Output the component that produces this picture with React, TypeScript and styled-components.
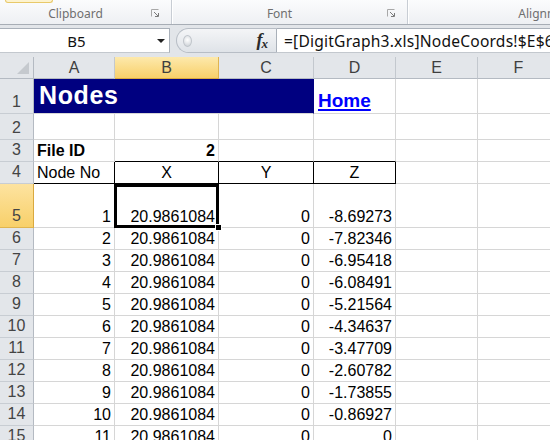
import React from "react";
import styled, { createGlobalStyle } from "styled-components";

const Global = createGlobalStyle`
  html, body { margin: 0; padding: 0; width: 550px; height: 440px; overflow: hidden; background: #fff; }
  body { font-family: "Liberation Sans", Arial, sans-serif; }
`;

const Page = styled.div`
  width: 550px;
  height: 440px;
  overflow: hidden;
  display: flex;
  flex-direction: column;
  background: #e2e5e9;
`;

/* ---------- Ribbon ---------- */
const Ribbon = styled.div`
  flex: none;
  height: 25px;
  box-sizing: border-box;
  display: grid;
  grid-template-columns: 172px 236px 300px;
  background: linear-gradient(#fbfcfd, #eef0f3);
  border-bottom: 1px solid #a7adb5;
`;

const Group = styled.div`
  display: grid;
  grid-template-columns: 1fr 20px;
  grid-template-rows: 4px 1fr;
  border-right: 1px solid #c8cdd4;
  box-shadow: 1px 0 0 #ffffff;
`;

const ButtonStub = styled.div`
  grid-column: 1;
  grid-row: 1;
  justify-self: start;
  margin-left: 5px;
  width: 48px;
  height: 3px;
  box-sizing: border-box;
  border: 1px solid #e8c96a;
  border-top: none;
  border-radius: 0 0 3px 3px;
  background: #fdf3cf;
`;

const GroupLabel = styled.div`
  grid-column: 1;
  grid-row: 2;
  display: flex;
  align-items: center;
  justify-content: center;
  font-family: "Noto Sans", "Open Sans", sans-serif;
  font-size: 12px;
  color: #6f6f6f;
  white-space: nowrap;
  padding-bottom: 2px;
`;

const Launcher = styled.div`
  grid-column: 2;
  grid-row: 2;
  display: flex;
  align-items: center;
  justify-content: flex-start;
  padding-bottom: 2px;
`;

const LauncherIcon = () => (
  <svg width="8" height="8" viewBox="0 0 8 8">
    <path d="M0.5 7.5V0.5H7.5" fill="none" stroke="#a8a8a8" strokeWidth="1" />
    <path d="M3 3L7 7" stroke="#7a7a7a" strokeWidth="1" />
    <path d="M7.5 4V7.5H4" fill="none" stroke="#7a7a7a" strokeWidth="1" />
  </svg>
);

/* ---------- Formula bar ---------- */
const FormulaBar = styled.div`
  flex: none;
  margin-top: 3px;
  height: 25px;
  display: flex;
`;

const NameBox = styled.div`
  width: 170px;
  box-sizing: border-box;
  display: flex;
  align-items: center;
  background: #fff;
  border-top: 1px solid #a9b0b9;
  border-bottom: 1px solid #c3c8ce;
  border-right: 1px solid #a9b0b9;
`;

const NameText = styled.div`
  flex: 1;
  text-align: center;
  font-family: "Noto Sans", "Open Sans", sans-serif;
  font-size: 15px;
  color: #111;
`;

const DropArrow = styled.div`
  width: 0;
  height: 0;
  margin-right: 4px;
  margin-left: 4px;
  border-left: 4px solid transparent;
  border-right: 4px solid transparent;
  border-top: 4px solid #222;
`;

const FxArea = styled.div`
  margin-left: 6px;
  width: 101px;
  box-sizing: border-box;
  display: flex;
  align-items: center;
  justify-content: space-between;
  padding: 0 8px 0 6px;
  background: linear-gradient(#f4f5f7, #dfe3e8);
  border: 1px solid #b7bdc5;
  border-right: 1px solid #a9b0b9;
  border-radius: 13px 0 0 13px;
`;

const Knob = styled.div`
  width: 7px;
  height: 10px;
  border-radius: 50%;
  background: radial-gradient(circle at 50% 40%, #ffffff, #c9ced4);
  border: 1px solid #c0c5cb;
`;

const Fx = styled.div`
  font-family: "Liberation Serif", "Times New Roman", serif;
  font-style: italic;
  font-weight: 700;
  font-size: 18px;
  color: #2a2a2a;
  display: flex;
  align-items: baseline;
`;

const FxSub = styled.span`
  font-size: 13px;
  position: relative;
  top: 2px;
  margin-left: -1px;
`;

const FormulaInput = styled.div`
  flex: 1;
  box-sizing: border-box;
  display: flex;
  align-items: center;
  padding-left: 7px;
  background: #fff;
  border-top: 1px solid #a9b0b9;
  border-bottom: 1px solid #c3c8ce;
  font-family: "Noto Sans", "Open Sans", sans-serif;
  font-size: 15.6px;
  letter-spacing: 0.2px;
  color: #111;
  white-space: nowrap;
  overflow: hidden;
`;

/* ---------- Sheet ---------- */
const Sheet = styled.div`
  flex: none;
  margin-top: 4px;
  display: grid;
  grid-template-columns: 34px 81px 104px 95px 82px 82px 82px;
  grid-template-rows: 22px 35px 26px 22px 22px 44px repeat(10, 22px);
  background: #fff;
`;

const Corner = styled.div`
  box-sizing: border-box;
  background: #e3e6ea;
  border-right: 1px solid #b4bac2;
  border-bottom: 1px solid #b4bac2;
  display: flex;
  align-items: flex-end;
  justify-content: flex-end;
  padding: 0 4px 4px 0;
`;

const CornerTriangle = styled.div`
  width: 0;
  height: 0;
  border-left: 12px solid transparent;
  border-bottom: 12px solid #c5c9ce;
`;

const ColHead = styled.div<{ $selected?: boolean }>`
  box-sizing: border-box;
  display: flex;
  align-items: center;
  justify-content: center;
  font-size: 16px;
  color: #3f3f3f;
  background: ${(p) =>
    p.$selected ? "linear-gradient(#fde9ac, #f8d06a)" : "#e3e6ea"};
  border-right: 1px solid ${(p) => (p.$selected ? "#e0b550" : "#c3c8ce")};
  border-bottom: 1px solid ${(p) => (p.$selected ? "#d9a93f" : "#b4bac2")};
`;

const RowHead = styled.div<{ $selected?: boolean }>`
  box-sizing: border-box;
  display: flex;
  align-items: flex-end;
  justify-content: center;
  padding-bottom: 3px;
  font-size: 16px;
  line-height: 16px;
  color: #444;
  background: ${(p) =>
    p.$selected ? "linear-gradient(#fde3a0, #f8d06a)" : "#e3e6ea"};
  border-right: 1px solid ${(p) => (p.$selected ? "#d9a93f" : "#b4bac2")};
  border-bottom: 1px solid ${(p) => (p.$selected ? "#e0b550" : "#c8cdd3")};
`;

type Align = "left" | "center" | "right";

const Cell = styled.div<{
  $align?: Align;
  $bold?: boolean;
  $right?: string;
  $bottom?: string;
}>`
  box-sizing: border-box;
  min-width: 0;
  display: flex;
  align-items: flex-end;
  justify-content: ${(p) =>
    p.$align === "right" ? "flex-end" : p.$align === "center" ? "center" : "flex-start"};
  padding: 0 3px 2px 3px;
  font-size: 16px;
  line-height: 16px;
  font-weight: ${(p) => (p.$bold ? 700 : 400)};
  color: #000;
  white-space: nowrap;
  border-right: 1px solid ${(p) => p.$right ?? "#d6d6d6"};
  border-bottom: 1px solid ${(p) => p.$bottom ?? "#d6d6d6"};
`;

const TitleCell = styled(Cell)`
  grid-column: span 3;
  background: #000080;
  color: #fff;
  font-size: 25px;
  line-height: 25px;
  font-weight: 700;
  letter-spacing: 0.6px;
  padding: 0 0 5px 5px;
  border-right-color: #000080;
`;

const HomeLink = styled.a`
  color: #0000ff;
  font-weight: 700;
  font-size: 19px;
  line-height: 19px;
  text-decoration: underline;
  text-decoration-thickness: 2px;
  text-underline-offset: 2px;
  margin-bottom: 1px;
  margin-left: 1px;
`;

const ActiveCell = styled(Cell)`
  position: relative;
  z-index: 2;
  &::after {
    content: "";
    position: absolute;
    top: 0;
    left: -1px;
    right: -1px;
    bottom: -1px;
    border: 3px solid #000;
    pointer-events: none;
  }
  &::before {
    content: "";
    position: absolute;
    right: -4px;
    bottom: -4px;
    width: 5px;
    height: 5px;
    background: #000;
    border: 1px solid #fff;
    z-index: 3;
  }
`;

const cols = ["A", "B", "C", "D", "E", "F"];
const zVals = [
  "-8.69273",
  "-7.82346",
  "-6.95418",
  "-6.08491",
  "-5.21564",
  "-4.34637",
  "-3.47709",
  "-2.60782",
  "-1.73855",
  "-0.86927",
  "0",
];

const BLACK = "#000";

export default function App() {
  return (
    <>
      <Global />
      <Page>
        <Ribbon>
          <Group>
            <ButtonStub />
            <GroupLabel>Clipboard</GroupLabel>
            <Launcher>
              <LauncherIcon />
            </Launcher>
          </Group>
          <Group>
            <GroupLabel>Font</GroupLabel>
            <Launcher>
              <LauncherIcon />
            </Launcher>
          </Group>
          <Group>
            <GroupLabel>Alignment</GroupLabel>
            <Launcher>
              <LauncherIcon />
            </Launcher>
          </Group>
        </Ribbon>

        <FormulaBar>
          <NameBox>
            <NameText>B5</NameText>
            <DropArrow />
          </NameBox>
          <FxArea>
            <Knob />
            <Fx>
              f<FxSub>x</FxSub>
            </Fx>
          </FxArea>
          <FormulaInput>=[DigitGraph3.xls]NodeCoords!$E$6</FormulaInput>
        </FormulaBar>

        <Sheet>
          <Corner>
            <CornerTriangle />
          </Corner>
          {cols.map((c) => (
            <ColHead key={c} $selected={c === "B"}>
              {c}
            </ColHead>
          ))}

          {/* Row 1 */}
          <RowHead>1</RowHead>
          <TitleCell>Nodes</TitleCell>
          <Cell>
            <HomeLink href="#">Home</HomeLink>
          </Cell>
          <Cell />
          <Cell />

          {/* Row 2 */}
          <RowHead>2</RowHead>
          {cols.map((c) => (
            <Cell key={"r2" + c} />
          ))}

          {/* Row 3 */}
          <RowHead>3</RowHead>
          <Cell $bold>File ID</Cell>
          <Cell $bold $align="right" $bottom={BLACK}>
            2
          </Cell>
          <Cell $bottom={BLACK} />
          <Cell $bottom={BLACK} />
          <Cell />
          <Cell />

          {/* Row 4 */}
          <RowHead>4</RowHead>
          <Cell $right={BLACK} $bottom={BLACK}>
            Node No
          </Cell>
          <Cell $align="center" $right={BLACK} $bottom={BLACK}>
            X
          </Cell>
          <Cell $align="center" $right={BLACK} $bottom={BLACK}>
            Y
          </Cell>
          <Cell $align="center" $right={BLACK} $bottom={BLACK}>
            Z
          </Cell>
          <Cell />
          <Cell />

          {/* Data rows */}
          {zVals.map((z, i) => {
            const row = i + 5;
            const B = i === 0 ? ActiveCell : Cell;
            return (
              <React.Fragment key={row}>
                <RowHead $selected={row === 5}>{row}</RowHead>
                <Cell $align="right">{i + 1}</Cell>
                <B $align="right">20.9861084</B>
                <Cell $align="right">0</Cell>
                <Cell $align="right">{z}</Cell>
                <Cell />
                <Cell />
              </React.Fragment>
            );
          })}
        </Sheet>
      </Page>
    </>
  );
}
